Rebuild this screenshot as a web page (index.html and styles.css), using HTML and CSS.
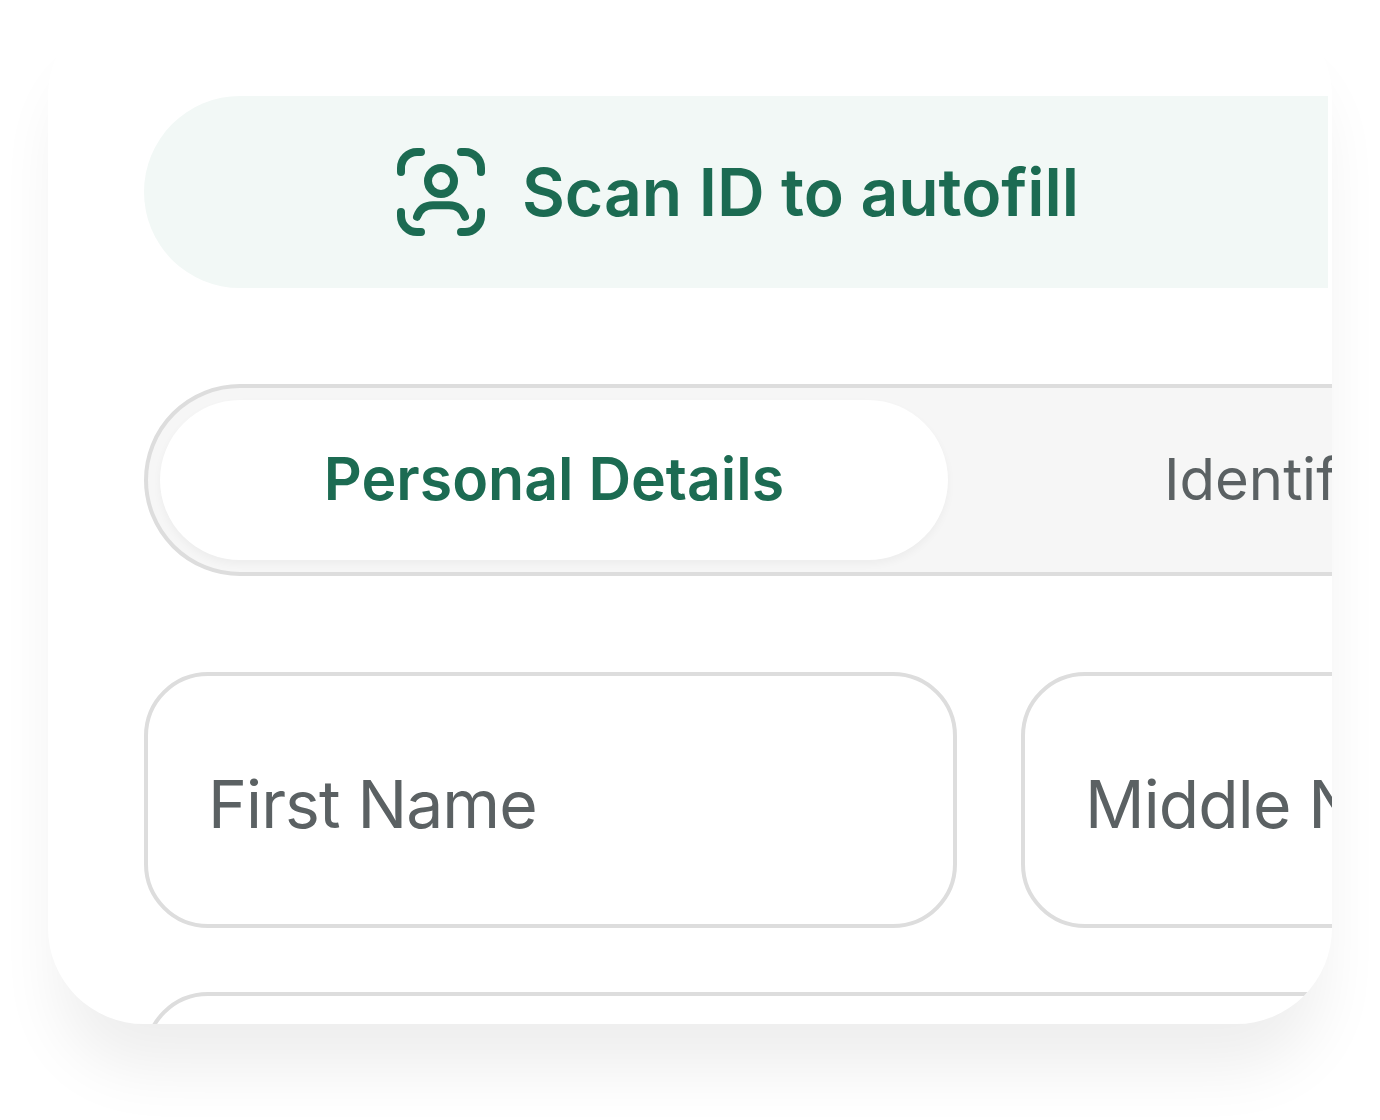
FILE: index.html
```html
<!DOCTYPE html>
<html lang="en">
<head>
<meta charset="utf-8">
<title>Scan ID</title>
<link rel="stylesheet" href="styles.css">
</head>
<body>
<main class="card">
  <button class="scan" type="button">
    <svg class="scan-icon" viewBox="0 0 24 24" fill="none" stroke="currentColor" stroke-width="2" stroke-linecap="round" stroke-linejoin="round" aria-hidden="true">
      <path d="M2 7V6a4 4 0 0 1 4-4h1"/>
      <path d="M17 2h1a4 4 0 0 1 4 4v1"/>
      <path d="M22 17v1a4 4 0 0 1-4 4h-1"/>
      <path d="M7 22H6a4 4 0 0 1-4-4v-1"/>
      <circle cx="12" cy="9.25" r="3.25"/>
      <path d="M6 18.2C6.6 16.4 8 15.3 10 15.3h4c2 0 3.4 1.1 4 2.9"/>
    </svg>
    <span>Scan ID to autofill</span>
  </button>
  <div class="tabs">
    <div class="tab tab-active">Personal Details</div>
    <div class="tab">Identification</div>
  </div>
  <div class="fields">
    <div class="field">First Name</div>
    <div class="field">Middle Name</div>
    <div class="field field-wide"></div>
  </div>
</main>
</body>
</html>
```
FILE: styles.css
```css
* { box-sizing: border-box; }
html, body { margin: 0; height: 1120px; overflow: hidden; background: #fff; }
body { padding: 0 48px; font-family: Inter, "Liberation Sans", sans-serif; }
.card {
  height: 1024px;
  padding: 96px 0 0 96px;
  background: #fff;
  border-radius: 96px;
  overflow: hidden;
  box-shadow: 0 56px 64px -12px rgba(0, 0, 0, 0.07);
}
.scan {
  display: flex;
  align-items: center;
  justify-content: center;
  gap: 33px;
  width: 1184px;
  height: 192px;
  padding: 0;
  border: 0;
  border-radius: 96px 0 0 96px;
  background: #f2f8f6;
  color: #1c6b52;
  font: 600 66px Inter, "Liberation Sans", sans-serif;
  letter-spacing: -0.05px;
}
.scan-icon { width: 96px; height: 96px; flex: none; }
.tabs {
  display: flex;
  width: 1600px;
  height: 192px;
  margin-top: 96px;
  padding: 12px;
  background: #f6f6f6;
  border: 4px solid #ddd;
  border-radius: 96px;
}
.tab {
  display: flex;
  align-items: center;
  justify-content: center;
  flex: none;
  width: 788px;
  padding-bottom: 3px;
  border-radius: 80px;
  color: #5b6163;
  font-size: 58px;
  white-space: nowrap;
}
.tab-active {
  background: #fff;
  color: #1c6b52;
  font-size: 59px;
  font-weight: 600;
  box-shadow: 0 4px 8px rgba(0, 0, 0, 0.04);
}
.fields {
  display: grid;
  grid-template-columns: 813px 813px;
  grid-auto-rows: 256px;
  gap: 64px;
  margin-top: 96px;
}
.field {
  display: flex;
  align-items: center;
  padding: 8px 0 0 60px;
  border: 4px solid #ddd;
  border-radius: 64px;
  color: #5b6163;
  font-size: 66px;
  letter-spacing: -0.9px;
  white-space: nowrap;
}
.field-wide { grid-column: span 2; }
```
